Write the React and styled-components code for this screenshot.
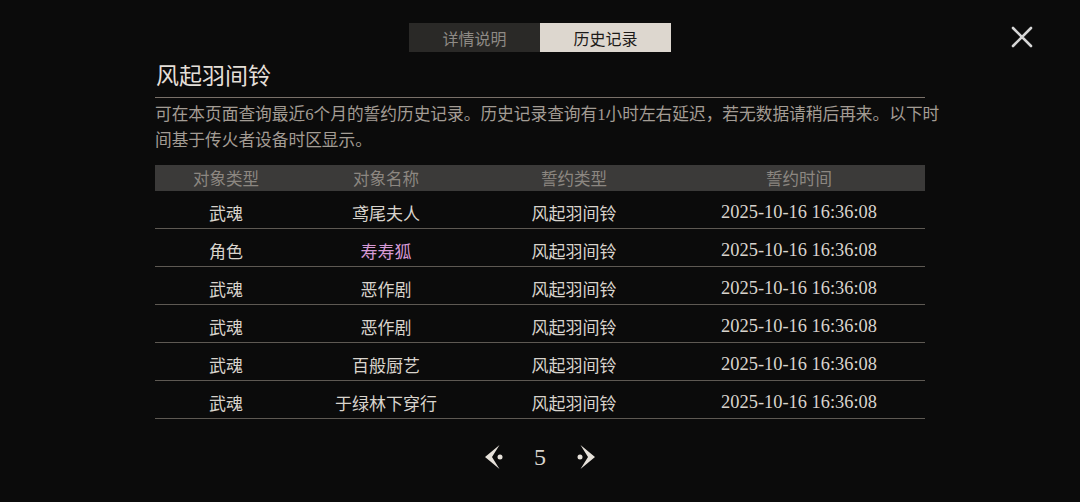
import React from "react";
import styled, { createGlobalStyle } from "styled-components";

const GlobalStyle = createGlobalStyle`
  html, body {
    margin: 0;
    padding: 0;
    background: #0b0b0b;
  }
  body {
    font-family: "Liberation Serif", "Noto Sans CJK SC", serif;
  }
  * {
    box-sizing: border-box;
  }
`;

const rows = [
  { type: "武魂", name: "鸢尾夫人" },
  { type: "角色", name: "寿寿狐", rare: true },
  { type: "武魂", name: "恶作剧" },
  { type: "武魂", name: "恶作剧" },
  { type: "武魂", name: "百般厨艺" },
  { type: "武魂", name: "于绿林下穿行" },
];

const Arrow = ({ flip }) => (
  <svg
    width="20"
    height="26"
    viewBox="0 0 20 26"
    style={{ transform: flip ? "scaleX(-1)" : "none" }}
  >
    <path d="M15.5 1 L1 13 L15.5 25 L8 13 Z" fill="#e6e1da" />
    <circle cx="16" cy="13" r="2.5" fill="#e6e1da" />
  </svg>
);

const App = () => {
  return (
    <Page>
      <GlobalStyle />
      <TopBar>
        <Tabs>
          <Tab>详情说明</Tab>
          <Tab active>历史记录</Tab>
        </Tabs>
        <Close>
          <svg width="24" height="24" viewBox="0 0 24 24">
            <path
              d="M3 3 L21 21 M21 3 L3 21"
              stroke="#d6d6d6"
              strokeWidth="2.6"
              strokeLinecap="round"
            />
          </svg>
        </Close>
      </TopBar>
      <Content>
        <Title>风起羽间铃</Title>
        <Desc>
          可在本页面查询最近6个月的誓约历史记录。历史记录查询有1小时左右延迟，若无数据请稍后再来。以下时间基于传火者设备时区显示。
        </Desc>
        <Table>
          <HeadRow>
            <Cell>对象类型</Cell>
            <Cell>对象名称</Cell>
            <Cell>誓约类型</Cell>
            <Cell>誓约时间</Cell>
          </HeadRow>
          {rows.map((r, i) => (
            <Row key={i}>
              <Cell>{r.type}</Cell>
              <Cell rare={r.rare}>{r.name}</Cell>
              <Cell>风起羽间铃</Cell>
              <Cell date>2025-10-16 16:36:08</Cell>
            </Row>
          ))}
        </Table>
        <Pager>
          <Arrow />
          <PageNum>5</PageNum>
          <Arrow flip />
        </Pager>
      </Content>
    </Page>
  );
};

const Page = styled.div`
  width: 1080px;
  height: 502px;
  background: #0b0b0b;
  color: #d9d4cd;
  overflow: hidden;
`;

const TopBar = styled.div`
  display: flex;
  justify-content: center;
  padding-top: 23px;
  position: relative;
`;

const Tabs = styled.div`
  display: flex;
`;

const Tab = styled.div`
  width: 131px;
  height: 29px;
  display: flex;
  align-items: center;
  justify-content: center;
  font-size: 16px;
  background: ${(p) => (p.active ? "#ddd7cf" : "#2a2927")};
  color: ${(p) => (p.active ? "#1c1a18" : "#8e8a85")};
`;

const Close = styled.div`
  position: absolute;
  top: 25px;
  right: 46px;
  width: 24px;
  height: 24px;
`;

const Content = styled.div`
  width: 770px;
  margin: 0 auto;
  padding-top: 10px;
`;

const Title = styled.div`
  font-size: 23px;
  color: #e4dfd8;
  padding: 0 0 5px 1px;
  border-bottom: 1px solid #7a716a;
  line-height: 30px;
`;

const Desc = styled.div`
  font-size: 16.7px;
  line-height: 26px;
  color: #a39c94;
  padding-top: 4px;
  width: 790px;
`;

const Table = styled.div`
  margin-top: 11px;
`;

const HeadRow = styled.div`
  display: grid;
  grid-template-columns: 142px 178px 198px 252px;
  height: 26px;
  align-items: center;
  background: #3b3a39;
  color: #8c8781;
  font-size: 16.5px;
`;

const Row = styled.div`
  display: grid;
  grid-template-columns: 142px 178px 198px 252px;
  height: 38px;
  align-items: center;
  border-bottom: 1px solid #5e5953;
  font-size: 17px;
  padding-top: 5px;
`;

const Cell = styled.div`
  text-align: center;
  color: ${(p) => (p.rare ? "#d79ad6" : "inherit")};
  font-size: ${(p) => (p.date ? "18.4px" : "inherit")};
  white-space: nowrap;
`;

const Pager = styled.div`
  display: flex;
  justify-content: center;
  align-items: center;
  gap: 30px;
  margin-top: 25px;
`;

const PageNum = styled.div`
  font-size: 24px;
  color: #d9d4cd;
  line-height: 24px;
`;

export default App;
